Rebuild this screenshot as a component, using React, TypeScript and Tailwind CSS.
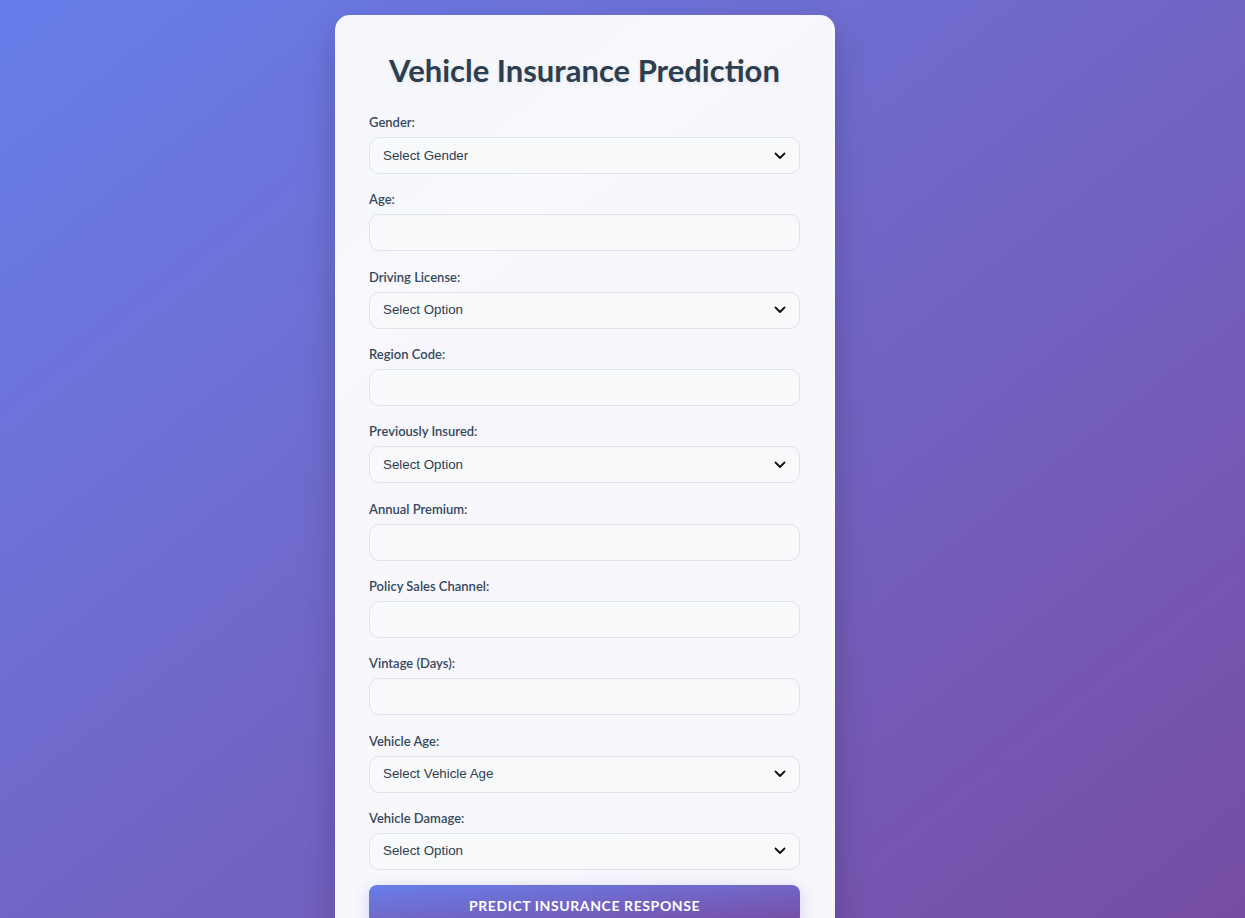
import React from "react";

const labelCls = "block text-[13px] leading-[20px] font-semibold text-[#34495e] mb-[5px]";
const fieldCls =
  "block w-full h-[37px] rounded-[10px] border border-[#dfe4ea] bg-[#f8f9fa] px-[13px] text-[13.33px] text-[#2c3e50] outline-none";

const LATO = '"Lato", "Open Sans", sans-serif';

function Field({ label, children }: { label: string; children: React.ReactNode }) {
  return (
    <div className="mb-[15.33px]">
      <label className={labelCls} style={{ fontFamily: LATO }}>
        {label}
      </label>
      {children}
    </div>
  );
}

function Select({ placeholder, options }: { placeholder: string; options: string[] }) {
  return (
    <div className="relative">
      <select
        className={fieldCls + " appearance-none"}
        style={{ fontFamily: '"Liberation Sans", Arial, sans-serif' }}
        defaultValue=""
      >
        <option value="">{placeholder}</option>
        {options.map((o) => (
          <option key={o} value={o}>
            {o}
          </option>
        ))}
      </select>
      <svg
        className="pointer-events-none absolute right-[14px] top-1/2 -translate-y-1/2"
        width="12"
        height="8"
        viewBox="0 0 12 8"
      >
        <path d="M1.5 1.5 L6 6 L10.5 1.5" fill="none" stroke="#111" strokeWidth="1.8" strokeLinecap="round" strokeLinejoin="round" />
      </svg>
    </div>
  );
}

function Input() {
  return <input type="number" className={fieldCls} style={{ fontFamily: '"Liberation Sans", Arial, sans-serif' }} />;
}

export default function App() {
  return (
    <div className="min-h-screen w-full bg-gradient-to-br from-[#667eea] to-[#764ba2] pl-[335px] pt-[15px] pb-[20px]">
      <div className="w-[500px] rounded-[15px] bg-white/95 pl-[34px] pr-[35px] pt-[34px] pb-[35px] shadow-[0_15px_35px_rgba(0,0,0,0.2)]">
        <h1
          className="text-center text-[31px] leading-[42px] font-bold text-[#2c3e50] mb-[21px] [text-shadow:0_2px_4px_rgba(0,0,0,0.08)]"
          style={{ fontFamily: LATO }}
        >
          Vehicle Insurance Prediction
        </h1>
        <Field label="Gender:">
          <Select placeholder="Select Gender" options={["Male", "Female"]} />
        </Field>
        <Field label="Age:">
          <Input />
        </Field>
        <Field label="Driving License:">
          <Select placeholder="Select Option" options={["Yes", "No"]} />
        </Field>
        <Field label="Region Code:">
          <Input />
        </Field>
        <Field label="Previously Insured:">
          <Select placeholder="Select Option" options={["Yes", "No"]} />
        </Field>
        <Field label="Annual Premium:">
          <Input />
        </Field>
        <Field label="Policy Sales Channel:">
          <Input />
        </Field>
        <Field label="Vintage (Days):">
          <Input />
        </Field>
        <Field label="Vehicle Age:">
          <Select placeholder="Select Vehicle Age" options={["< 1 Year", "1-2 Year", "> 2 Years"]} />
        </Field>
        <Field label="Vehicle Damage:">
          <Select placeholder="Select Option" options={["Yes", "No"]} />
        </Field>
        <button
          className="mt-[3px] block w-full h-[40px] rounded-[8px] bg-gradient-to-br from-[#667eea] to-[#764ba2] text-white text-[14px] font-bold uppercase tracking-[0.6px] shadow-[0_4px_15px_rgba(102,126,234,0.3)]"
          style={{ fontFamily: LATO }}
        >
          Predict Insurance Response
        </button>
      </div>
    </div>
  );
}
